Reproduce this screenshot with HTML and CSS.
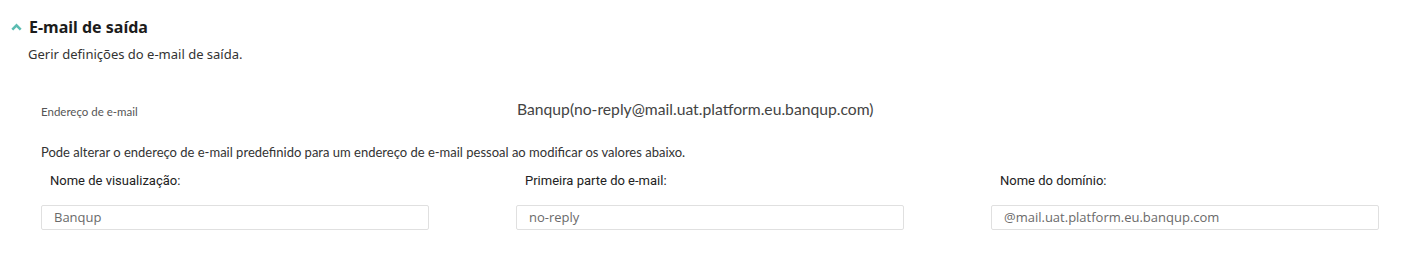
FILE: index.html
```html
<!DOCTYPE html>
<html lang="pt">
<head>
<meta charset="utf-8">
<link rel="stylesheet" href="styles.css">
</head>
<body>
<section class="panel">
  <header class="panel-head">
    <svg class="chev" width="11" height="8" viewBox="0 0 11 8"><path d="M1.3 6.6 L5.5 2.4 L9.7 6.6" fill="none" stroke="#5bbcb1" stroke-width="2.6"/></svg>
    <h2 class="title">E-mail de saída</h2>
  </header>
  <p class="desc">Gerir definições do e-mail de saída.</p>

  <div class="grid addr-row">
    <div class="addr-label">Endereço de e-mail</div>
    <div class="addr-value">Banqup(no-reply@mail.uat.platform.eu.banqup.com)</div>
  </div>

  <p class="hint">Pode alterar o endereço de e-mail predefinido para um endereço de e-mail pessoal ao modificar os valores abaixo.</p>

  <div class="grid fields">
    <div class="field">
      <label class="field-label">Nome de visualização:</label>
      <div class="input">Banqup</div>
    </div>
    <div class="field">
      <label class="field-label">Primeira parte do e-mail:</label>
      <div class="input">no-reply</div>
    </div>
    <div class="field">
      <label class="field-label">Nome do domínio:</label>
      <div class="input">@mail.uat.platform.eu.banqup.com</div>
    </div>
  </div>
</section>
</body>
</html>
```

FILE: styles.css
```css
* { box-sizing: border-box; }
body {
  margin: 0;
  background: #fff;
  font-family: "Open Sans", "Noto Sans", sans-serif;
  color: #222;
}
.panel {
  padding: 15px 0 0 11px;
}
.panel-head {
  display: flex;
  align-items: center;
  gap: 7px;
  height: 24px;
}
.chev { margin-top: 0; }
.title {
  margin: 0;
  font-family: "Noto Sans", "Open Sans", sans-serif;
  font-size: 16px;
  font-weight: 700;
  color: #1c1c1c;
}
.desc {
  margin: 6px 0 0 17px;
  font-family: "Noto Sans", "Open Sans", sans-serif;
  font-size: 13px;
  color: #333;
}
.grid {
  display: grid;
  grid-template-columns: 475px 475px 475px;
  margin-left: 30px;
}
.addr-row {
  margin-top: 35px;
  align-items: center;
  height: 22px;
}
.addr-label {
  font-family: "Lato", sans-serif;
  font-size: 11.5px;
  color: #555;
  padding-top: 4px;
}
.addr-value {
  font-family: "Lato", sans-serif;
  font-size: 15.7px;
  color: #444;
  padding-left: 1px;
}
.hint {
  margin: 24px 0 0 30px;
  font-family: "Lato", sans-serif;
  font-size: 13px;
  color: #333;
}
.fields {
  margin-top: 13px;
}
.field {
  display: flex;
  flex-direction: column;
}
.field-label {
  font-family: Roboto, sans-serif;
  font-size: 13px;
  color: #222;
  padding-left: 9px;
  height: 17px;
}
.input {
  margin-top: 15px;
  width: 388px;
  height: 25px;
  border: 1px solid #e0e0e0;
  border-radius: 2px;
  padding: 3px 12px;
  font-family: "Open Sans", sans-serif;
  font-size: 13px;
  color: #6a6a6a;
  line-height: 17px;
}
```
